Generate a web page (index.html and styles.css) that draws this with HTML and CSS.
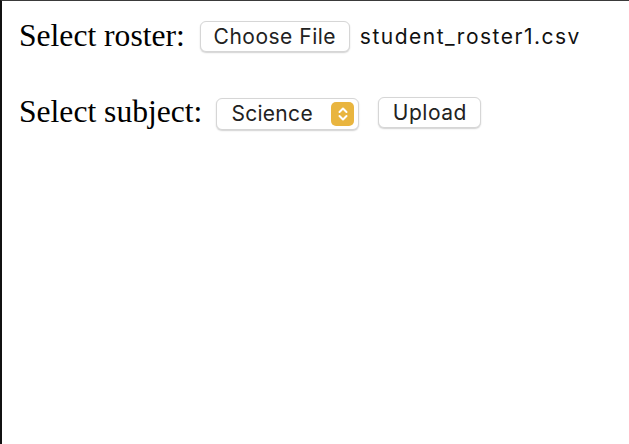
FILE: index.html
```html
<!DOCTYPE html>
<html>
<head>
<meta charset="utf-8">
<link rel="stylesheet" href="styles.css">
</head>
<body>
<div class="page">
  <form class="form">
    <div class="row row-roster">
      <label class="label">Select roster:</label>
      <span class="btn btn-file">Choose File</span>
      <span class="file-name">student_roster1.csv</span>
    </div>
    <div class="row row-subject">
      <label class="label">Select subject:</label>
      <span class="select">
        <span class="select-text">Science</span>
        <span class="select-arrow">
          <svg width="12" height="16" viewBox="0 0 12 16"><path d="M2.5 6 L6 2.5 L9.5 6 M2.5 10 L6 13.5 L9.5 10" fill="none" stroke="#fff" stroke-width="2" stroke-linecap="round" stroke-linejoin="round"/></svg>
        </span>
      </span>
      <span class="btn btn-upload">Upload</span>
    </div>
  </form>
</div>
</body>
</html>
```
FILE: styles.css
```css
html, body {
  margin: 0;
  padding: 0;
  background: #fff;
}
.page {
  box-sizing: border-box;
  height: 444px;
  border-top: 1px solid #3a3a3a;
  border-left: 2px solid #111;
  padding: 17px 0 0 17px;
}
.form {
  display: flex;
  flex-direction: column;
  gap: 40px;
}
.row {
  display: flex;
  align-items: center;
  height: 36px;
}
.label {
  font-family: "Liberation Serif", "Times New Roman", serif;
  font-size: 31.6px;
  line-height: 36px;
  color: #000;
}
.btn, .select, .file-name {
  font-family: Inter, "Liberation Sans", Arial, sans-serif;
  font-size: 21px;
}
.btn {
  box-sizing: border-box;
  display: flex;
  align-items: center;
  justify-content: center;
  height: 31px;
  background: #fff;
  border: 1px solid #d6d6d6;
  border-radius: 6px;
  box-shadow: 0 1px 1.5px rgba(0, 0, 0, 0.18);
  color: #222;
  letter-spacing: 0.5px;
}
.btn-file {
  width: 150px;
  margin-left: 15px;
  margin-top: 1px;
}
.file-name {
  margin-left: 10px;
  color: #111;
  letter-spacing: 1.5px;
}
.select {
  box-sizing: border-box;
  display: flex;
  align-items: center;
  justify-content: space-between;
  width: 143px;
  height: 32px;
  margin-left: 14px;
  margin-top: 3px;
  padding: 0 4px 0 14px;
  background: #fff;
  border: 1px solid #d6d6d6;
  border-radius: 6px;
  box-shadow: 0 1px 1.5px rgba(0, 0, 0, 0.18);
  color: #222;
  letter-spacing: 0.3px;
}
.select-arrow {
  display: flex;
  align-items: center;
  justify-content: center;
  width: 23px;
  height: 24px;
  border-radius: 5px;
  background: #e9b53f;
}
.btn-upload {
  width: 103px;
  margin-left: 19px;
}
```
